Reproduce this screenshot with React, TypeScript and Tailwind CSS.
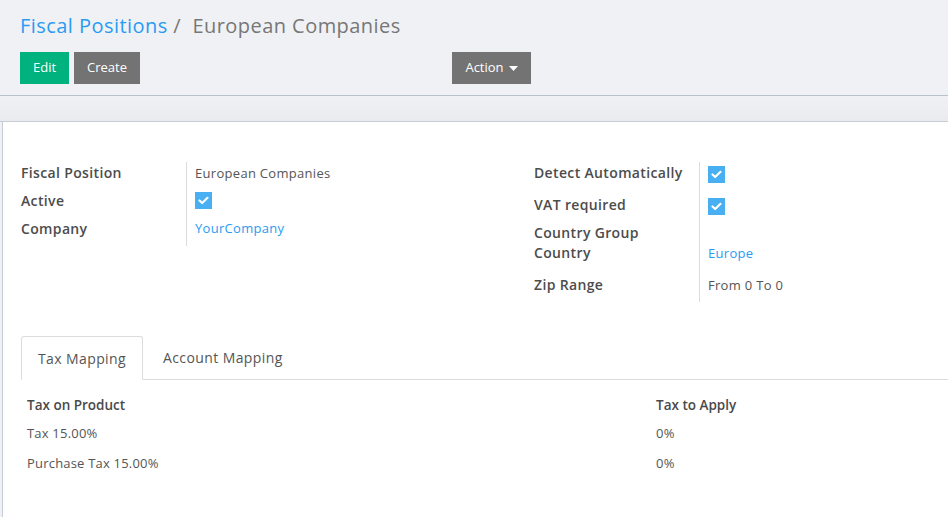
import React from "react";

const font = { fontFamily: '"Open Sans", "Noto Sans", sans-serif' };

const Check = () => (
  <span className="inline-flex items-center justify-center w-[17px] h-[17px] bg-[#47aff2]">
    <svg width="11" height="9" viewBox="0 0 11 9">
      <path d="M1.5 4.5 L4.2 7 L9.5 1.8" stroke="#fff" strokeWidth="2.2" fill="none" strokeLinecap="round" strokeLinejoin="round" />
    </svg>
  </span>
);

const Label = ({ children }: { children: React.ReactNode }) => (
  <div className="text-[14px] font-semibold text-[#4c4c4c] leading-[20px] tracking-[0.35px]">{children}</div>
);

const App = () => {
  return (
    <div className="w-[948px] h-[517px] overflow-hidden bg-[#f0f1f5]" style={font}>
      <div className="h-[96px] border-b border-[#b9c1cf] pl-[20px] pt-[12px]">
        <div className="text-[20px] leading-[28px] tracking-[0.45px]">
          <span className="text-[#2a9bf2]">Fiscal Positions</span>
          <span className="text-[#777]"> /&nbsp;&nbsp;European Companies</span>
        </div>
        <div className="flex mt-[12px] items-center">
          <button className="h-[32px] w-[49px] bg-[#00b27d] text-white text-[13px]">Edit</button>
          <button className="h-[32px] w-[66px] ml-[5px] bg-[#737373] text-white text-[13px]">Create</button>
          <button className="h-[32px] w-[79px] ml-[312px] bg-[#737373] text-white text-[13px] flex items-center justify-center gap-[5px]">
            Action
            <svg width="9" height="5" viewBox="0 0 9 5"><path d="M0 0 H9 L4.5 5 Z" fill="#fff" /></svg>
          </button>
        </div>
      </div>
      <div className="h-[26px] border-b border-[#c8ccd6] bg-gradient-to-b from-[#f0f1f5] to-[#eaebef]" />
      <div className="ml-[2px] border-l border-[#c8ccd6] bg-white h-[400px] pt-[40px]">
        <div className="flex pl-[18px]">
          <div className="flex w-[513px]">
            <div className="w-[165px] flex flex-col gap-[8px] pt-[1px]">
              <Label>Fiscal Position</Label>
              <Label>Active</Label>
              <Label>Company</Label>
            </div>
            <div className="border-l border-[#dcdcdc] h-[84px] pl-[8px] flex flex-col text-[13px] text-[#555] tracking-[0.3px]">
              <div className="leading-[20px] h-[28px] pt-[1px]">European Companies</div>
              <div className="h-[28px] pt-[1px]"><Check /></div>
              <div className="leading-[20px] text-[#2a9bf2]">YourCompany</div>
            </div>
          </div>
          <div className="flex">
            <div className="w-[165px] flex flex-col pt-[1px]">
              <div className="h-[32px]"><Label>Detect Automatically</Label></div>
              <div className="h-[28px]"><Label>VAT required</Label></div>
              <Label>Country Group</Label>
              <div className="h-[32px]"><Label>Country</Label></div>
              <Label>Zip Range</Label>
            </div>
            <div className="border-l border-[#dcdcdc] h-[140px] pl-[8px] flex flex-col text-[13px] text-[#555] tracking-[0.3px]">
              <div className="h-[32px] pt-[3px]"><Check /></div>
              <div className="h-[49px] pt-[3px]"><Check /></div>
              <div className="leading-[20px] h-[32px] text-[#2a9bf2]">Europe</div>
              <div className="leading-[20px]">From 0 To 0</div>
            </div>
          </div>
        </div>
        <div className="mt-[34px] pl-[18px]">
          <div className="flex border-b border-[#dcdcdc] h-[44px] text-[14px] text-[#555] tracking-[0.4px]">
            <div className="w-[122px] border border-[#dcdcdc] border-b-white rounded-t-[3px] bg-white flex items-center justify-center mb-[-1px]">
              Tax Mapping
            </div>
            <div className="px-[20px] flex items-center">Account Mapping</div>
          </div>
          <div className="pl-[6px] text-[13px] text-[#555] tracking-[0.2px]">
            <div className="flex h-[37px] items-end pb-[2px] font-semibold text-[13.5px] text-[#4a4a4a] tracking-[0px]">
              <div className="w-[629px]">Tax on Product</div>
              <div>Tax to Apply</div>
            </div>
            <div className="flex h-[30px] items-center pt-[4px]">
              <div className="w-[629px]">Tax 15.00%</div>
              <div>0%</div>
            </div>
            <div className="flex h-[29px] items-center pt-[4px]">
              <div className="w-[629px]">Purchase Tax 15.00%</div>
              <div>0%</div>
            </div>
          </div>
        </div>
      </div>
    </div>
  );
};

export default App;
